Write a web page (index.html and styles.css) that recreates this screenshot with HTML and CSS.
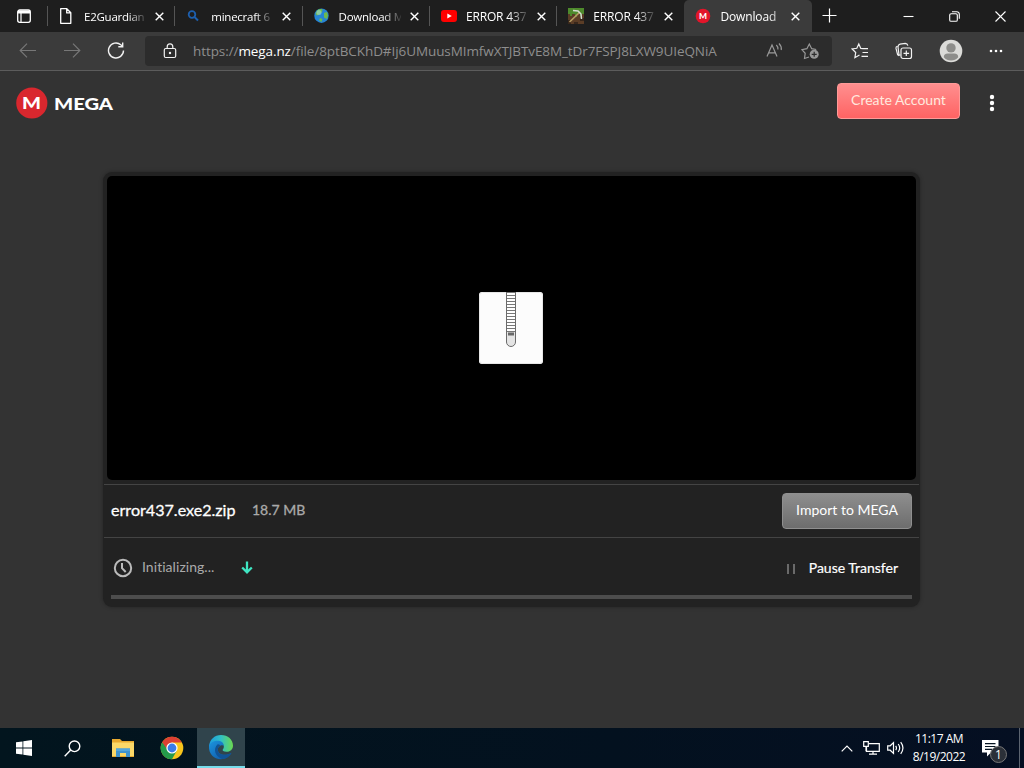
FILE: index.html
```html
<!doctype html>
<html>
  <head>
    <meta charset="utf-8">
    <title>Download</title>
    <link rel="stylesheet" href="styles.css">
</head>
<body>

<div id="tabBar">
  <div class="tabMenu">
    <svg width="16" height="16" viewBox="0 0 16 16"><rect x="1.7" y="2" width="12.6" height="12.3" rx="2" fill="none" stroke="#fff" stroke-width="1.3"/><path d="M2 2.5h12v3H2z" fill="#fff"/><path d="M5 5v9" stroke="#fff" stroke-width="1.2"/></svg>
  </div>
  <div class="tab">
    <svg class="favicon" width="16" height="16" viewBox="0 0 16 16"><path d="M1.7.7h6.1l4 4v10.600H1.700zM7.700.7v4.200h4.100" fill="none" stroke="#fff" stroke-width="1.3" stroke-linejoin="round"/></svg>
    <span class="tabTitle tight">E2Guardian</span>
    <svg class="close" width="9" height="9" viewBox="0 0 9 9"><path d="M.7.7l7.6 7.6M8.3.7L.7 8.3"/></svg>
  </div>
  <div class="tab">
    <svg class="favicon" width="16" height="16" viewBox="0 0 16 16"><circle cx="6" cy="6.5" r="3.300" fill="none" stroke="#1d5fae" stroke-width="1.800"/><path d="M8.500 9l3.500 3.500" stroke="#1d5fae" stroke-width="2"/></svg>
    <span class="tabTitle tight">minecraft 6</span>
    <svg class="close" width="9" height="9" viewBox="0 0 9 9"><path d="M.7.7l7.6 7.6M8.3.7L.7 8.3"/></svg>
  </div>
  <div class="tab">
    <svg class="favicon" width="16" height="16" viewBox="0 0 16 16"><circle cx="7.5" cy="7.700" r="7.200" fill="#2684d4"/><path d="M3 2.500C5 .8 7 .8 8.500 1.200L8 4 5.500 6.500 3 7.500 1.500 6zM10 5l3-1 1 3.500-1 3.500-3-1.500zM6 10l2.500 1-1 3-2.500-1.500z" fill="#6db84d"/><circle cx="5" cy="4.500" r="2.500" fill="#a7dcf4" opacity=".5"/></svg>
    <span class="tabTitle tight">Download M</span>
    <svg class="close" width="9" height="9" viewBox="0 0 9 9"><path d="M.7.7l7.6 7.6M8.3.7L.7 8.3"/></svg>
  </div>
  <div class="tab">
    <svg class="favicon" width="16" height="16" viewBox="0 0 16 16"><rect x="0" y="2" width="16" height="12" rx="3" fill="#f00"/><path d="M6.300 5.400v5.200L10.800 8z" fill="#fff"/></svg>
    <span class="tabTitle">ERROR 437</span>
    <svg class="close" width="9" height="9" viewBox="0 0 9 9"><path d="M.7.7l7.6 7.6M8.3.7L.7 8.3"/></svg>
  </div>
  <div class="tab">
    <svg class="favicon" width="16" height="16" viewBox="0 0 16 16"><path d="M0 0h16v16H0z" fill="#5b3d26"/><path d="M0 0h16v6h-2v2h-2V6H9v3H7V6H4v2H2V6H0z" fill="#4e8a2c"/><path d="M0 12h3v4H0zM12 10h4v3h-4zM6 14h4v2H6z" fill="#38271b"/><path d="M1.500 14L12 4" stroke="#b79b62" stroke-width="1.600"/><path d="M5 2.500l5 .5 3 3 .5 5" fill="none" stroke="#d4dbd0" stroke-width="1.500"/></svg>
    <span class="tabTitle">ERROR 437</span>
    <svg class="close" width="9" height="9" viewBox="0 0 9 9"><path d="M.7.7l7.6 7.6M8.3.7L.7 8.3"/></svg>
  </div>
  <div class="tab active">
    <svg class="favicon" width="16" height="16" viewBox="0 0 16 16"><circle cx="8" cy="8" r="7.300" fill="#e2152a"/><text class="megaM" x="4" y="10.900" font-size="8" textLength="8" lengthAdjust="spacingAndGlyphs">M</text></svg>
    <span class="tabTitle">Download</span>
    <svg class="close" width="9" height="9" viewBox="0 0 9 9"><path d="M.7.7l7.6 7.6M8.3.7L.7 8.3"/></svg>
  </div>
  <svg class="newTab" width="15" height="15" viewBox="0 0 15 15"><path d="M7.500.5v14M.5 7.500h14" stroke="#fff" stroke-width="1.200"/></svg>
  <div id="windowButtons">
    <svg width="11" height="11" viewBox="0 0 11 11"><path d="M.5 5.500h10"/></svg>
    <svg width="11" height="11" viewBox="0 0 11 11"><rect x=".7" y="2.700" width="7.600" height="7.600" rx="1.400"/><path d="M3 .7h4.800a2.500 2.500 0 0 1 2.500 2.500v4.600"/></svg>
    <svg width="11" height="11" viewBox="0 0 11 11"><path d="M.5.5l10 10M10.500.5l-10 10"/></svg>
  </div>
</div>

<div id="toolbar">
  <div id="navButtons">
    <svg width="18" height="16" viewBox="0 0 18 16"><path d="M17 7.500H1.500M8 .7L1.200 7.500 8 14.300" stroke="#777"/></svg>
    <svg width="18" height="16" viewBox="0 0 18 16"><path d="M1 7.500h15.500M10 .7l6.800 6.800-6.800 6.800" stroke="#777"/></svg>
    <svg width="18" height="18" viewBox="0 0 18 18"><path d="M16.500 8.500A7.500 7.500 0 1 1 13.800 2.700L15.500 4.300M15.700.5v4.300h-4.400" stroke="#f2f2f2" stroke-width="1.400"/></svg>
  </div>
  <div id="addressBar">
    <svg class="lock" width="14" height="16" viewBox="0 0 14 16"><rect x="1.300" y="5.500" width="11.400" height="9" rx="1.500"/><path d="M4.200 5.300V3.800a2.800 3 0 0 1 5.600 0v1.500"/><circle cx="7" cy="10" r=".6" fill="#fff"/></svg>
    <span id="url">https://<b>mega.nz</b>/file/8ptBCKhD#Ij6UMuusMImfwXTJBTvE8M_tDr7FSPJ8LXW9UIeQNiA</span>
    <svg class="addressIcon" width="18" height="18" viewBox="0 0 18 18"><path d="M2 14.500L7 3l5 11.500M3.700 10.800h6.600M11.300 3q2 1.800 1.600 4.500M14 1.500q3 3 2.200 6.500"/></svg>
    <svg class="addressIcon" width="18" height="18" viewBox="0 0 18 18"><path d="M8 15l-4.500 1.500.7-5.200L.9 7.600l5-.9L8.300 2l2.400 4.700 4.500.8"/><circle cx="13.200" cy="12.300" r="4.500" fill="#999" stroke="none"/><path d="M13.200 9.800v5M10.700 12.300h5" stroke="#2c2c2c"/></svg>
  </div>
  <div id="browserButtons">
    <svg width="18" height="18" viewBox="0 0 18 18"><path d="M12 6.700L9.800 6.500 7.800 2 5.800 6.300 1.200 7l3.500 3.500-.8 5.200L8.500 13M11 6.700h6M11.500 10.500h5.500M10.500 14.300h6.500"/></svg>
    <svg width="18" height="18" viewBox="0 0 18 18"><rect x="6" y="6" width="10.500" height="10.500" rx="2"/><path d="M11.300 8.500v5.600M8.500 11.300h5.600M3.900 13.700L2.600 12.700 1 6.400Q.7 4.700 2.300 4.200M5.500 13.200L4 12.900 3 5Q3 2.700 5 2.200L10.300 1.400Q12.300 1.500 12.900 3.600"/></svg>
    <svg width="24" height="24" viewBox="0 0 24 24"><g stroke="none"><circle cx="12" cy="12" r="11.300" fill="#dbdbd8"/><circle cx="12" cy="8.900" r="4.700" fill="#8d8d8a"/><path d="M4.800 18.200q0-3.700 4-3.700h6.400q4 0 4 3.700a9.500 9.500 0 0 1-14.400 0z" fill="#8d8d8a"/></g></svg>
    <svg width="14" height="4" viewBox="0 0 14 4"><g stroke="none" fill="#fff"><circle cx="2" cy="2" r="1.300"/><circle cx="7" cy="2" r="1.300"/><circle cx="12" cy="2" r="1.300"/></g></svg>
  </div>
</div>

<div id="page">
  <div id="header">
    <svg id="logo" width="100" height="32" viewBox="0 0 100 32">
      <circle cx="15.800" cy="16" r="15.600" fill="#d9272e"/>
      <text class="megaM" x="6" y="21.700" font-size="16.500" textLength="19" lengthAdjust="spacingAndGlyphs">M</text>
      <text class="megaM" x="38" y="22.500" font-size="17" textLength="59" lengthAdjust="spacingAndGlyphs">MEGA</text>
    </svg>
    <button class="btn red">Create Account</button>
    <svg id="dots" width="6" height="18" viewBox="0 0 6 18"><g fill="#fff"><circle cx="3" cy="3" r="2.200"/><circle cx="3" cy="9" r="2.200"/><circle cx="3" cy="15" r="2.200"/></g></svg>
  </div>

  <div id="download">
    <div id="viewer">
      <svg width="64" height="72" viewBox="0 0 64 72">
        <defs>
          <pattern id="teeth" width="9" height="3" patternUnits="userSpaceOnUse"><path d="M0 .5h9" stroke="#777"/></pattern>
        </defs>
        <rect width="64" height="72" rx="3" fill="#fcfcfc"/>
        <rect x=".5" y=".5" width="63" height="71" rx="3" fill="none" stroke="#e6e6e6"/>
        <path d="M27.500 0h9v50a4.500 4.500 0 0 1-9 0z" fill="#e4e4e4" stroke="#6b6b6b"/>
        <path d="M28 0h8v40h-8z" fill="#fff"/>
        <path d="M28 0h8v40h-8z" fill="url(#teeth)"/>
        <rect x="29" y="40.500" width="6" height="3" fill="#686868"/>
      </svg>
    </div>
    <div class="infoRow">
      <span class="fileName">error437.exe2.zip</span>
      <span class="fileSize">18.7 MB</span>
      <button class="btn grey">Import to MEGA</button>
    </div>
    <div class="transferRow">
      <svg width="20" height="20" viewBox="0 0 20 20"><circle cx="10" cy="10" r="8.200" fill="none" stroke="#bbb" stroke-width="2"/><path d="M9 5v5.200l3.700 3.800" fill="none" stroke="#bbb" stroke-width="2"/></svg>
      <span class="status">Initializing...</span>
      <svg class="arrow" width="12" height="13" viewBox="0 0 12 13"><path d="M6 .5v10.500M1.200 6.500L6 11.300l4.800-4.800" fill="none" stroke="#3fe6c3" stroke-width="2.300"/></svg>
      <svg class="pause" width="8" height="10" viewBox="0 0 8 10"><path d="M1 0v10M7 0v10" stroke="#777" stroke-width="1.700"/></svg>
      <span class="pauseText">Pause Transfer</span>
    </div>
    <div id="progress"></div>
  </div>
</div>

<div id="taskbar">
  <div class="taskItem">
    <svg width="16" height="16" viewBox="0 0 16 16"><path d="M0 2.300l6.500-.9v6.200H0zM7.300 1.200L16 0v7.600H7.300zM0 8.400h6.500v6.200L0 13.700zM7.300 8.400H16V16l-8.700-1.200z" fill="#fff"/></svg>
  </div>
  <div class="taskItem">
    <svg width="17" height="17" viewBox="0 0 17 17"><circle cx="10.500" cy="6.300" r="5.300" fill="none" stroke="#fff" stroke-width="1.400"/><path d="M6.700 10L.7 16.200" stroke="#fff" stroke-width="1.400"/></svg>
  </div>
  <div class="taskItem wide">
    <svg width="22" height="18" viewBox="0 0 22 18"><path d="M0 0h8l2 2h12v16H0z" fill="#e8a92f"/><path d="M0 3.500h22V17H0z" fill="#fbd868"/><path d="M4 9.500h14V18h-4v-4H8v4H4z" fill="#3f93cf"/><path d="M4 9.500h14V12H4z" fill="#53a6dc"/></svg>
  </div>
  <div class="taskItem chrome">
    <svg width="24" height="24" viewBox="0 0 24 24"><circle cx="12" cy="12" r="11.300" fill="#f8c51c"/><path d="M12 12L2.200 6.350A11.300 11.300 0 0 0 12 23.300L16.700 14.700z" fill="#249b4b"/><path d="M2.200 6.350A11.300 11.300 0 0 1 21.800 6.400H12L8 14.500z" fill="#dc4033"/><circle cx="12" cy="12" r="5.600" fill="#fff"/><circle cx="12" cy="12" r="4.400" fill="#3b7ce8"/></svg>
  </div>
  <div class="taskItem running">
    <svg width="26" height="26" viewBox="0 0 26 26">
      <defs>
        <linearGradient id="edgeTop"><stop offset="0" stop-color="#1b9ade"/><stop offset=".5" stop-color="#31c0c4"/><stop offset="1" stop-color="#6bd84f"/></linearGradient>
        <linearGradient id="edgeLow" x1="0" y1="0" x2="1" y2="1"><stop offset="0" stop-color="#1c95df"/><stop offset="1" stop-color="#0d4f9e"/></linearGradient>
      </defs>
      <path d="M1 12.500C1.500 5.500 6.500 1 13 1c7 0 12 4.800 12 10.500 0 4-3 6.300-6.500 6.300-3 0-4.500-1.200-3.700-2.300 2.800-3.500-.3-6.800-3.800-6.800-4 0-7.500 1.300-10 3.800z" fill="url(#edgeTop)"/>
      <path d="M1 12.500C2.300 8.300 6 6.700 9.500 6.700c3.500 0 6.300 1.800 6.300 5.100-1.300-1.500-6-.3-6 4 0 5 7.500 6.700 13.700 3C21.300 23 17.500 25.200 13 25.200 5.500 25.200.7 19.500 1 12.500z" fill="url(#edgeLow)"/>
      <path d="M9.700 10.300c-5 4.500-2.700 12.500 4.500 14.700 4 0 7.500-2.500 9.300-6.200-6.200 3.700-13.700 2-13.700-3 0-2.500 1.500-3.700 2.700-4.300-.8-.8-1.700-1.200-2.800-1.200z" fill="#105396"/>
    </svg>
  </div>
  <div id="tray">
    <svg width="12" height="7" viewBox="0 0 12 7"><path d="M.7 6.300L6 1l5.300 5.300"/></svg>
    <svg class="network" width="17" height="14" viewBox="0 0 17 14"><path d="M6 2.600h10.300v7.800H3.500V6M10 10.500v2.700M6 13.200h8M.7.7h4.600v4.600H.7zM3 5.300v5"/></svg>
    <svg class="volume" width="17" height="14" viewBox="0 0 17 14"><path d="M.7 4.800h2.500L6.500 1.600v10.800L3.200 9.200H.7zM8.700 4.800q1.500 2.200 0 4.400M11.200 3q3 4 0 8M13.700 1.200q4.500 5.800 0 11.600"/></svg>
    <div id="clock">
      <span class="time">11:17 AM</span>
      <span class="date">8/19/2022</span>
    </div>
    <div id="notifications">
      <svg width="17" height="17" viewBox="0 0 17 17"><path d="M0 0h16.500v12.500H9L5 16.500v-4H0z" fill="#fff" stroke="none"/><path d="M3 3.700h10.500M3 6.500h10.500M3 9.300h7" stroke="#071522"/></svg>
      <span class="badge">1</span>
    </div>
  </div>
</div>

</body>
</html>
```
FILE: styles.css
```css
*{
  box-sizing: border-box;
}
body{
  margin: 0;
  height: 768px;
  overflow: hidden;
  display: flex;
  flex-direction: column;
  background-color: #333;
  color: #fff;
  font-family: "Open Sans", "Noto Sans", sans-serif;
}
svg{
  display: block;
  flex: none;
}
#tabBar{
  display: flex;
  flex: none;
  height: 32px;
  background-color: #1e1e1e;
}
.tabMenu{
  width: 48px;
  padding: 8px 0 0 16px;
}
.tab{
  display: flex;
  align-items: center;
  width: 127.300px;
  height: 32px;
  padding: 0 11px;
  position: relative;
}
.tab::before{
  content: "";
  position: absolute;
  left: -1px;
  top: 6px;
  width: 1px;
  height: 20px;
  background-color: #555;
}
.tab.active{
  background-color: #3b3b3b;
  border-radius: 5px 5px 0 0;
}
.tab.active::before{
  display: none;
}
.tabTitle{
  width: 62px;
  margin: 0 9px;
  overflow: hidden;
  white-space: nowrap;
  font-size: 12px;
  letter-spacing: -0.15px;
  -webkit-mask-image: linear-gradient(90deg, #000 70%, rgba(0,0,0,0.1));
  mask-image: linear-gradient(90deg, #000 70%, rgba(0,0,0,0.1));
}
.tight{
  font-size: 11.500px;
  letter-spacing: -0.25px;
}
.tab.active .tabTitle{
  -webkit-mask-image: linear-gradient(90deg, #000 75%, rgba(0,0,0,0.5));
  mask-image: linear-gradient(90deg, #000 75%, rgba(0,0,0,0.5));
}
.close{
  stroke: #fff;
  stroke-width: 1.4;
}
.newTab{
  margin: 8px 0 0 10px;
}
#windowButtons{
  display: flex;
  align-items: center;
  gap: 35px;
  margin-left: auto;
  padding-right: 18px;
  fill: none;
  stroke: #fff;
  stroke-width: 1.1;
}
#toolbar{
  display: flex;
  flex: none;
  height: 39px;
  padding-top: 4px;
  background-color: #3b3b3b;
  border-bottom: 1px solid #5c5c5c;
  fill: none;
  stroke: #f2f2f2;
  stroke-width: 1.2;
}
#navButtons{
  display: flex;
  align-items: center;
  gap: 26px;
  width: 145px;
  height: 30px;
  padding-left: 19px;
}
#addressBar{
  display: flex;
  align-items: center;
  width: 687px;
  height: 30px;
  padding: 0 13px 0 18px;
  border-radius: 4px;
  background-color: #2c2c2c;
}
#url{
  width: 572px;
  margin-left: 16px;
  white-space: nowrap;
  color: #8e8e8e;
  font-size: 13.500px;
  letter-spacing: -0.085px;
}
#url b{
  color: #fff;
  font-weight: 500;
}
.addressIcon{
  stroke: #999;
}
.addressIcon + .addressIcon{
  margin-left: 18px;
}
#browserButtons{
  display: flex;
  align-items: center;
  gap: 26px;
  height: 30px;
  margin-left: 19px;
}
#page{
  flex: 1;
  font-family: Lato, sans-serif;
}
#header{
  display: flex;
  padding: 12px 29px 0 16px;
}
#logo{
  margin-top: 4px;
}
.megaM{
  fill: #fff;
  stroke: none;
  font-family: Lato, sans-serif;
  font-weight: 900;
}
.btn{
  height: 36px;
  margin-left: auto;
  padding: 0 0 3px;
  border-radius: 4px;
  color: #fff;
  font-family: Lato, sans-serif;
  font-size: 14px;
}
.red{
  width: 123px;
  border: 1px solid #ff9a98;
  background: linear-gradient(#ff8f8f, #ff6363);
  color: #ffe9de;
}
.grey{
  width: 130px;
  border: 1px solid #8f8f8f;
  background: linear-gradient(#8e8e8e, #6d6d6d);
}
#dots{
  margin: 11px 0 0 29px;
}
#download{
  width: 817px;
  height: 435px;
  margin: 53px 0 0 103px;
  padding: 4px 0 0;
  border-radius: 9px;
  background-color: #222;
  box-shadow: 0 0 4px rgba(0,0,0,0.3);
}
#viewer{
  display: flex;
  align-items: center;
  justify-content: center;
  width: 809px;
  height: 304px;
  margin: 0 4px 4px;
  padding-right: 2px;
  border-radius: 5px;
  background-color: #000;
}
.infoRow{
  display: flex;
  align-items: center;
  height: 54px;
  margin: 0 1px;
  padding: 0 7px;
  border-top: 1px solid #444;
  border-bottom: 1px solid #444;
}
.fileName{
  width: 141px;
  padding-bottom: 3px;
  font-size: 16.100px;
  -webkit-text-stroke: 0.3px #fff;
}
.fileSize{
  padding-bottom: 3px;
  color: #aaa;
  font-size: 14px;
  -webkit-text-stroke: 0.3px #aaa;
}
.transferRow{
  display: flex;
  align-items: center;
  height: 57px;
  padding: 2px 22px 0 10px;
  font-size: 14px;
}
.status{
  width: 99px;
  margin-left: 9px;
  padding-bottom: 2px;
  color: #aaa;
  letter-spacing: 0.05px;
}
.pause{
  margin: 3px 14px 0 auto;
}
.pauseText{
  -webkit-text-stroke: 0.2px #fff;
}
#progress{
  height: 4px;
  margin: 0 8px;
  background-color: #4d4d4d;
}
#taskbar{
  display: flex;
  flex: none;
  height: 40px;
  background: linear-gradient(90deg, #02151e, #03111f 60%, #050f22);
}
.taskItem{
  display: flex;
  align-items: center;
  justify-content: center;
  width: 48px;
}
.taskItem.wide{
  width: 53px;
}
.taskItem.chrome{
  padding-right: 2px;
}
.taskItem.running{
  background-color: #30444c;
  border-bottom: 2px solid #76dcea;
}
#tray{
  display: flex;
  align-items: center;
  margin-left: auto;
  padding-right: 4px;
  border-right: 1px solid #5c6470;
  margin-right: 4px;
  fill: none;
  stroke: #fff;
  stroke-width: 1.2;
}
.network{
  margin-left: 10px;
}
.volume{
  margin-left: 7px;
}
#clock{
  display: flex;
  flex-direction: column;
  align-items: center;
  width: 54px;
  margin: 0 16px 0 8px;
  font-size: 12px;
  line-height: 18px;
  letter-spacing: -0.5px;
  white-space: nowrap;
}
#notifications{
  position: relative;
  width: 33px;
}
.badge{
  position: absolute;
  left: 8px;
  top: 6px;
  width: 17px;
  height: 17px;
  border: 1px solid #777;
  border-radius: 50%;
  background-color: #2b3038;
  font-size: 12px;
  line-height: 15px;
  text-align: center;
}
```
